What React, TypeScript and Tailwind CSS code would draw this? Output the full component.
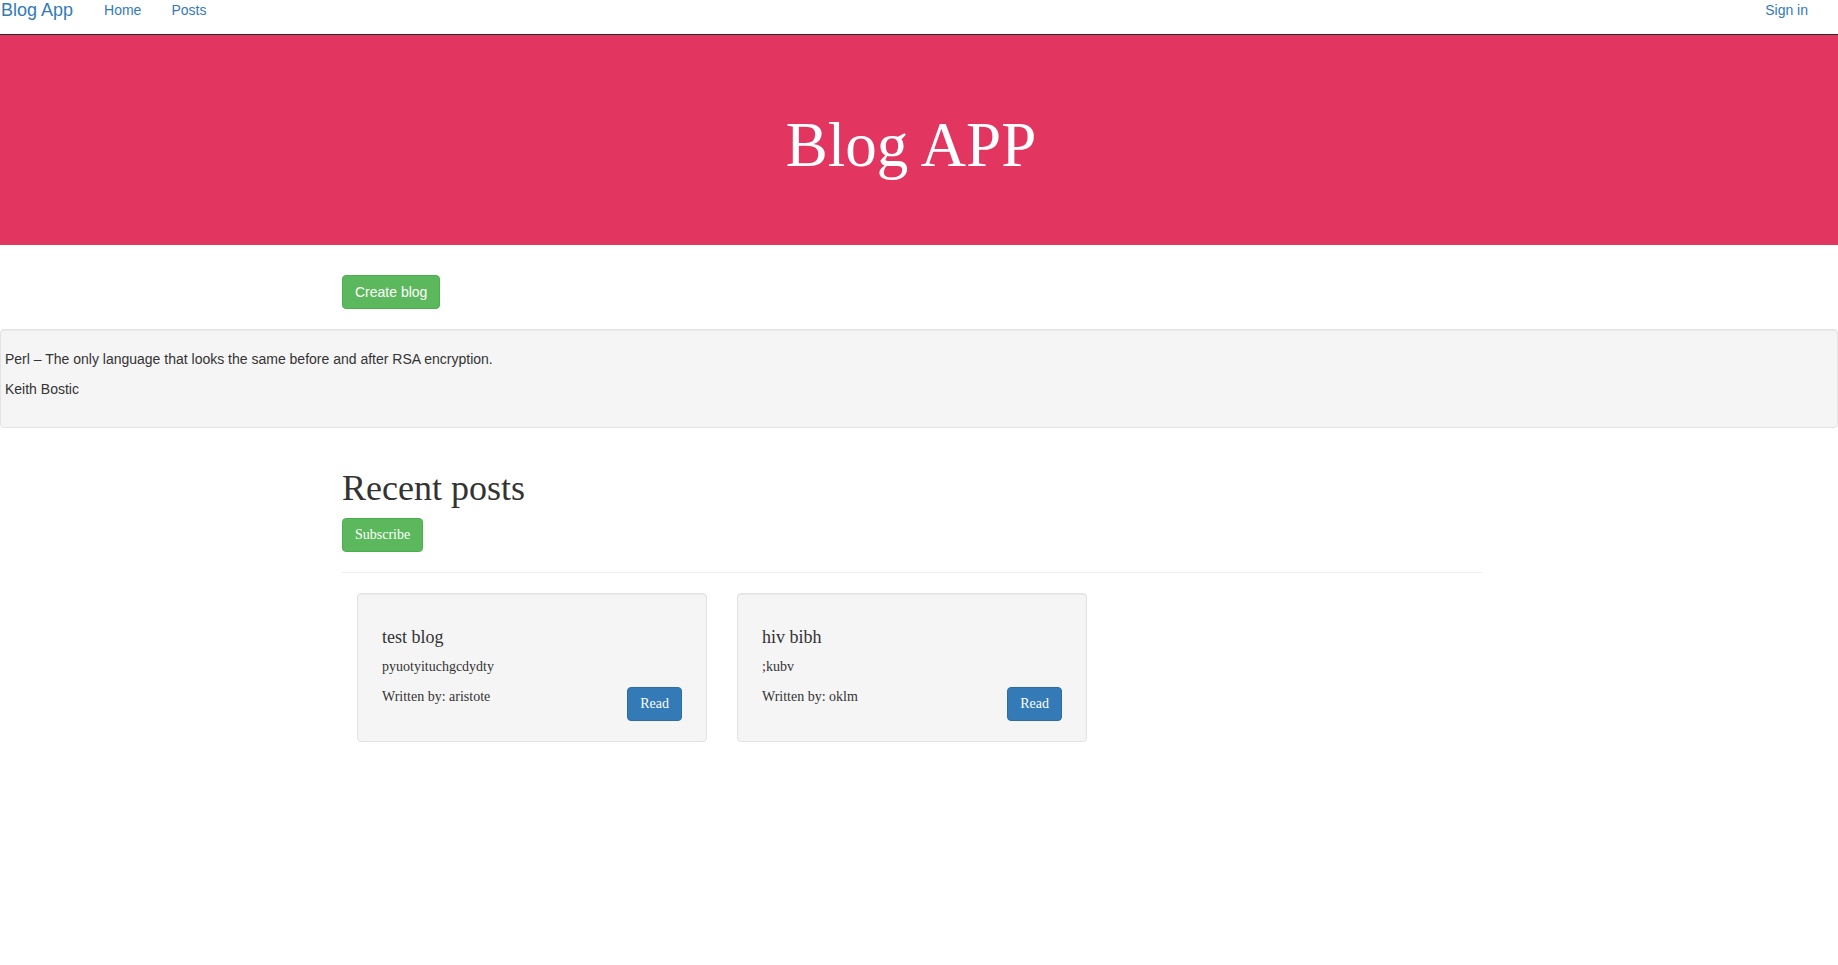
import React from "react";

interface Post {
  id: number;
  title: string;
  body: string;
  author: string;
}

const posts: Post[] = [
  { id: 1, title: "test blog", body: "pyuotyituchgcdydty", author: "aristote" },
  { id: 2, title: "hiv bibh", body: ";kubv", author: "oklm" },
];

const sans = "font-['Liberation_Sans',Arial,sans-serif]";
const serif = "font-['Liberation_Serif','Times_New_Roman',serif]";

const PostCard = ({ post }: { post: Post }) => (
  <div className={`w-[350px] h-[149px] bg-[#f5f5f5] border border-[#e3e3e3] rounded-[4px] shadow-[inset_0_1px_1px_rgba(0,0,0,0.05)] px-[24px] pt-[33px] ${serif} text-[#333]`}>
    <h4 className="text-[18px] leading-[20px]">{post.title}</h4>
    <p className="mt-[10px] text-[14px] leading-[20px]">{post.body}</p>
    <div className="mt-[10px] flex items-start justify-between">
      <p className="text-[14px] leading-[20px]">Written by: {post.author}</p>
      <button className="h-[34px] px-[12px] bg-[#337ab7] border border-[#2e6da4] rounded-[4px] text-white text-[14px] leading-[20px]">
        Read
      </button>
    </div>
  </div>
);

const App = () => {
  return (
    <div className={`min-h-screen bg-white ${sans} text-[#333]`}>
      {/* navbar */}
      <nav className="h-[35px] border-b border-[#2a2a2a] flex items-start justify-between pr-[30px]">
        <div className="flex items-start">
          <a className="ml-[1px] text-[18px] leading-[20px] text-[#337ab7] pr-[16px]">Blog App</a>
          <a className="px-[15px] text-[14px] leading-[20px] text-[#337ab7]">Home</a>
          <a className="px-[15px] text-[14px] leading-[20px] text-[#337ab7]">Posts</a>
        </div>
        <a className="text-[14px] leading-[20px] text-[#337ab7]">Sign in</a>
      </nav>

      {/* hero */}
      <div className="h-[210px] bg-[#e23661] flex items-center justify-center pt-[10px] pr-[16px]">
        <h1 className={`${serif} text-white text-[63px] leading-[69px]`}>Blog APP</h1>
      </div>

      <div className="ml-[342px] mt-[30px]">
        <button className="h-[34px] px-[12px] bg-[#5cb85c] border border-[#4cae4c] rounded-[4px] text-white text-[14px] leading-[20px]">
          Create blog
        </button>
      </div>

      {/* quote */}
      <div className="mt-[20px] h-[99px] bg-[#f5f5f5] border border-[#e3e3e3] rounded-[4px] shadow-[inset_0_1px_1px_rgba(0,0,0,0.05)] pt-[19px] pl-[4px] text-[14px] leading-[20px]">
        <p>Perl – The only language that looks the same before and after RSA encryption.</p>
        <p className="mt-[10px]">Keith Bostic</p>
      </div>

      {/* recent posts */}
      <div className="ml-[342px] w-[1140px] mt-[41px]">
        <h1 className={`${serif} text-[36px] leading-[39.6px]`}>Recent posts</h1>
        <button className={`mt-[9px] h-[34px] px-[12px] bg-[#5cb85c] border border-[#4cae4c] rounded-[4px] text-white text-[14px] leading-[20px] ${serif}`}>
          Subscribe
        </button>
        <hr className="mt-[20px] border-0 border-t border-[#eee]" />
        <div className="mt-[20px] ml-[15px] flex gap-[30px]">
          {posts.map((p) => (
            <PostCard key={p.id} post={p} />
          ))}
        </div>
      </div>
    </div>
  );
};

export default App;
